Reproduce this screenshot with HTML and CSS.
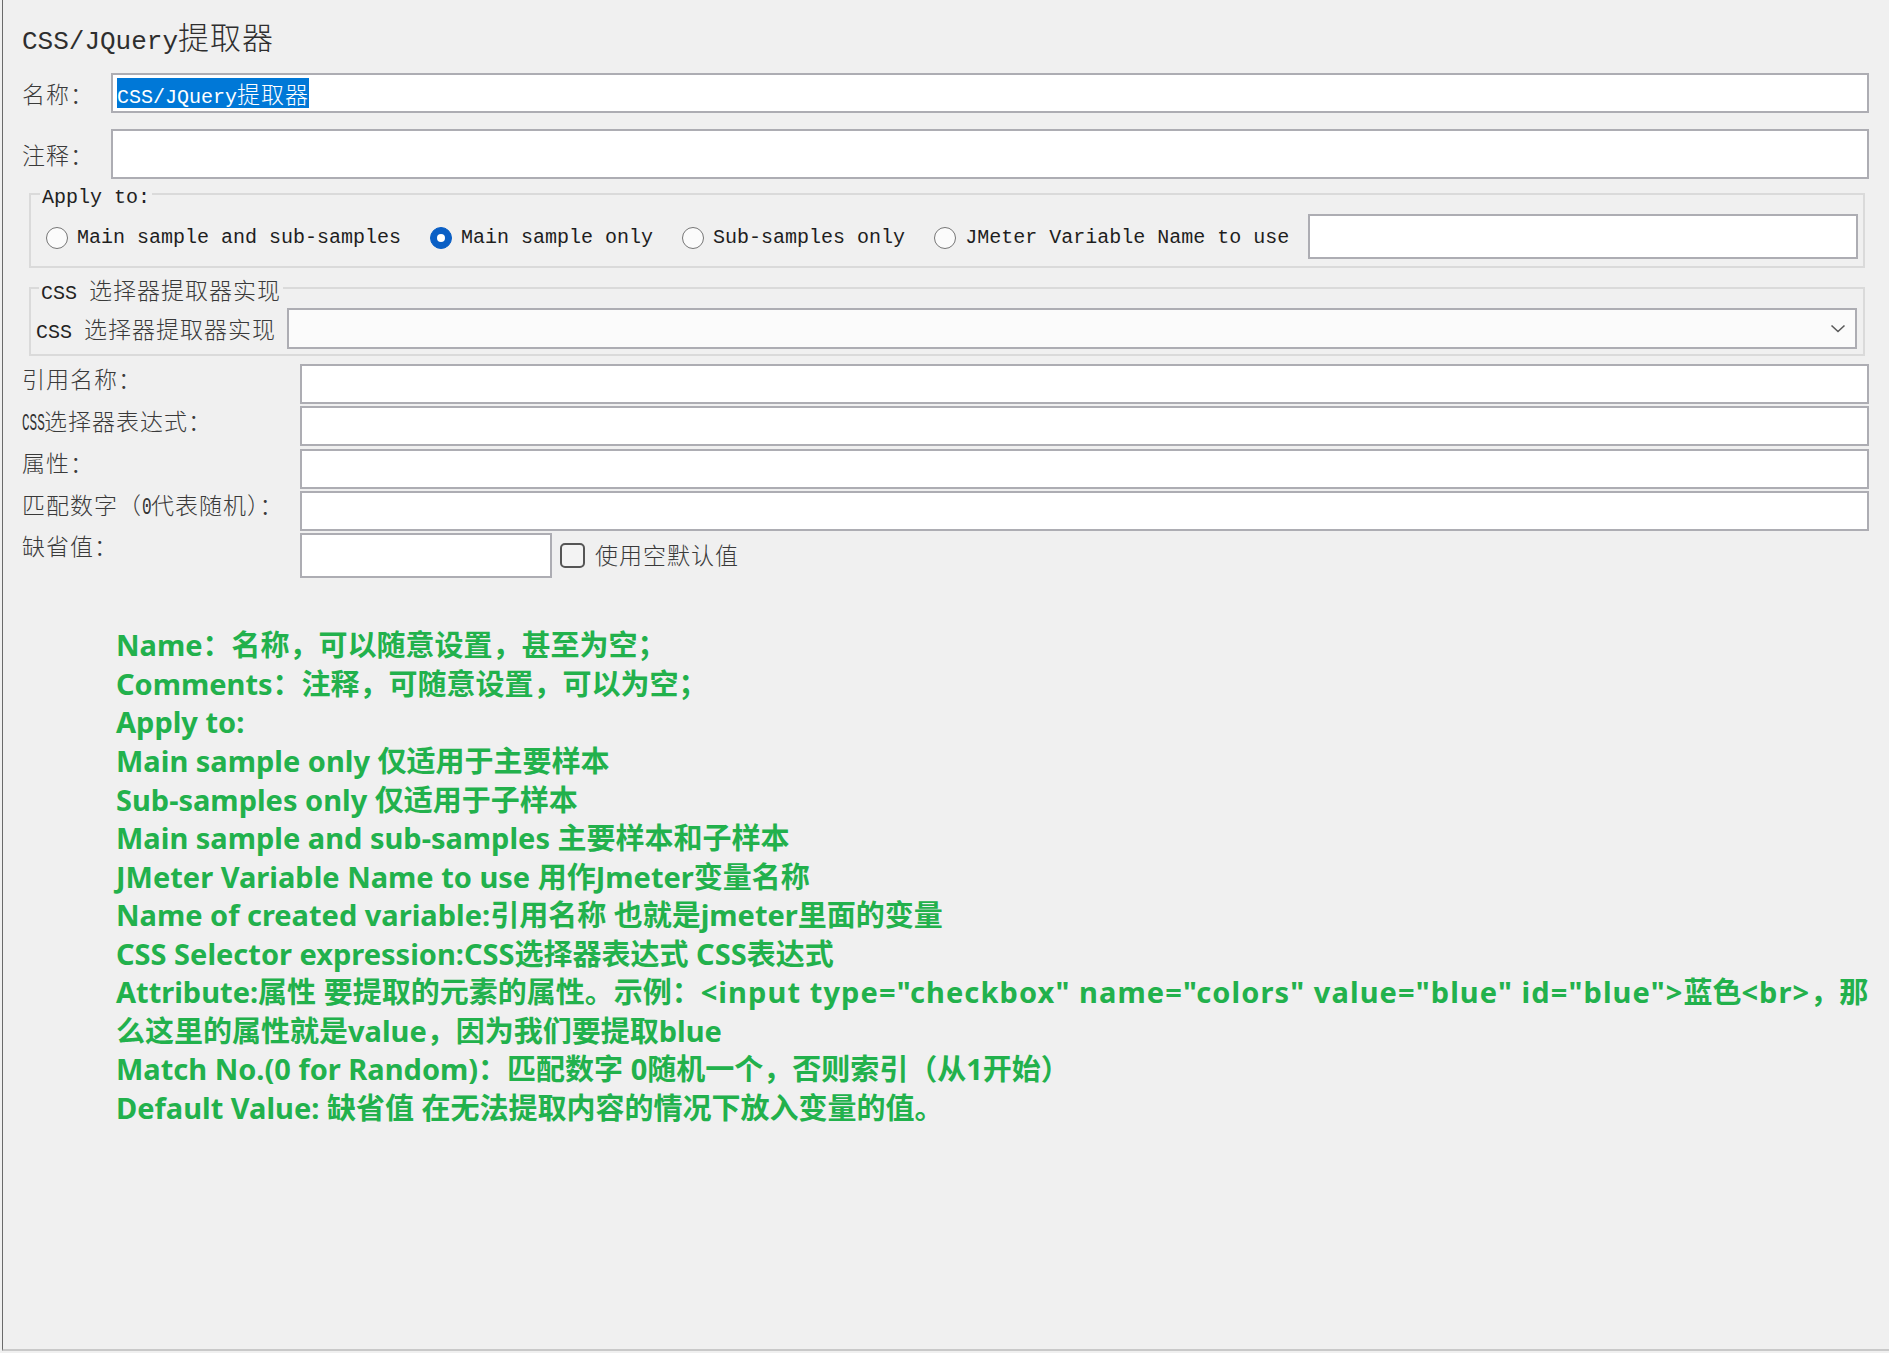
FILE: index.html
```html
<!DOCTYPE html>
<html lang="zh-CN">
<head>
<meta charset="utf-8">
<title>CSS/JQuery提取器</title>
<link rel="stylesheet" href="styles.css">
</head>
<body>
<div class="panel">
  <div class="title">CSS/JQuery<span class="zh">提取器</span></div>

  <div class="row row-name">
    <div class="lbl"><span class="zh">名称：</span></div>
    <div class="field field-name"><span class="sel">CSS/JQuery<span class="zh">提取器</span></span></div>
  </div>

  <div class="row row-comment">
    <div class="lbl"><span class="zh">注释：</span></div>
    <div class="field field-comment"></div>
  </div>

  <div class="group group-apply">
    <div class="legend">Apply to:</div>
    <div class="radios">
      <div class="radio"><span class="dot"></span><span class="rtext">Main sample and sub-samples</span></div>
      <div class="radio"><span class="dot on"></span><span class="rtext">Main sample only</span></div>
      <div class="radio"><span class="dot"></span><span class="rtext">Sub-samples only</span></div>
      <div class="radio radio-last"><span class="dot"></span><span class="rtext">JMeter Variable Name to use</span></div>
      <div class="field field-var"></div>
    </div>
  </div>

  <div class="group group-impl">
    <div class="legend">CSS <span class="zh">选择器提取器实现</span></div>
    <div class="impl-row">
      <div class="impl-lbl">CSS <span class="zh">选择器提取器实现</span></div>
      <div class="combo">
        <svg class="chev" width="16" height="9" viewBox="0 0 16 9"><polyline points="1.5,1.5 8,7.5 14.5,1.5" fill="none" stroke="#5a5a5a" stroke-width="1.6"/></svg>
      </div>
    </div>
  </div>

  <div class="form">
    <div class="frow">
      <div class="flbl"><span class="zh">引用名称：</span></div>
      <div class="field field-row"></div>
    </div>
    <div class="frow">
      <div class="flbl"><span class="cond">CSS</span><span class="zh">选择器表达式：</span></div>
      <div class="field field-row"></div>
    </div>
    <div class="frow">
      <div class="flbl"><span class="zh">属性：</span></div>
      <div class="field field-row"></div>
    </div>
    <div class="frow">
      <div class="flbl"><span class="zh">匹配数字（</span><span class="cond cond-one">0</span><span class="zh">代表随机）：</span></div>
      <div class="field field-row"></div>
    </div>
    <div class="frow frow-default">
      <div class="flbl flbl-top"><span class="zh">缺省值：</span></div>
      <div class="field field-default"></div>
      <div class="chk"><span class="box"></span><span class="zh chk-text">使用空默认值</span></div>
    </div>
  </div>

  <div class="notes">
    <p class="line">Name：名称，可以随意设置，甚至为空；</p>
    <p class="line">Comments：注释，可随意设置，可以为空；</p>
    <p class="line">Apply to:</p>
    <p class="line">Main sample only 仅适用于主要样本</p>
    <p class="line">Sub-samples only 仅适用于子样本</p>
    <p class="line">Main sample and sub-samples 主要样本和子样本</p>
    <p class="line">JMeter Variable Name to use 用作Jmeter变量名称</p>
    <p class="line">Name of created variable:引用名称 也就是jmeter里面的变量</p>
    <p class="line">CSS Selector expression:CSS选择器表达式 CSS表达式</p>
    <p class="line">Attribute:属性 要提取的元素的属性。示例：<span class="wide">&lt;input type="checkbox" name="colors" value="blue" id="blue"&gt;</span>蓝色<span class="wide">&lt;br&gt;</span>，那</p>
    <p class="line">么这里的属性就是value，因为我们要提取blue</p>
    <p class="line">Match No.(0 for Random)：匹配数字 0随机一个，否则索引（从1开始）</p>
    <p class="line">Default Value: 缺省值 在无法提取内容的情况下放入变量的值。</p>
  </div>
</div>
</body>
</html>
```

FILE: styles.css
```css
* { box-sizing: border-box; }

html, body {
  margin: 0;
  padding: 0;
  height: 100%;
}

body {
  background: #f0f0f0;
  font-family: "Liberation Mono", "Noto Sans CJK SC", monospace;
  font-size: 20px;
  color: #2a2a2a;
  overflow: hidden;
}

.panel {
  margin-left: 2px;
  height: 1351px;
  border-left: 1px solid #6a6a6a;
  border-bottom: 2px solid #c9c9c9;
  padding: 16px 20px 0 19px;
}

.zh {
  font-family: "Noto Sans CJK SC", sans-serif;
  font-size: 23px;
  font-weight: 300;
  letter-spacing: 1px;
  color: #3a3a3a;
}

.cond {
  display: inline-block;
  width: 22px;
  font-size: 23px;
  transform: scaleX(0.55);
  transform-origin: left center;
  white-space: nowrap;
  color: #333;
}

.cond-one {
  width: 9px;
  transform: scaleX(0.7);
}

/* title */
.title {
  height: 40px;
  line-height: 40px;
  font-size: 26px;
  color: #2e2e2e;
  white-space: nowrap;
}

.title .zh {
  font-size: 31px;
  letter-spacing: 1px;
  color: #2e2e2e;
}

/* top rows */
.row {
  display: flex;
  align-items: center;
}

.lbl {
  width: 89px;
  flex: none;
  white-space: nowrap;
}

.field {
  background: #ffffff;
  border: 2px solid #adadb3;
}

.row-name { margin-top: 17px; }
.row-comment { margin-top: 16px; }

.field-name {
  flex: 1;
  height: 40px;
  padding: 3px 4px;
}

.sel {
  display: inline-block;
  height: 30px;
  line-height: 30px;
  background: #0078d7;
  color: #ffffff;
  white-space: nowrap;
}

.sel .zh { color: #ffffff; }

.field-comment {
  flex: 1;
  height: 50px;
}

/* groups */
.group {
  border: 2px solid #dadada;
  margin-right: 4px;
  margin-left: 7px;
}

.legend {
  width: max-content;
  line-height: 24px;
  height: 24px;
  margin-top: -9px;
  padding: 0 2px;
  background: #f0f0f0;
  white-space: nowrap;
  color: #222;
}

.group-apply {
  margin-top: 14px;
  padding: 0 5px 7px 9px;
}

.radios {
  margin-top: 4px;
  height: 45px;
  display: flex;
  align-items: center;
  padding-left: 6px;
}

.radio {
  display: flex;
  align-items: center;
  gap: 9px;
  margin-right: 29px;
  white-space: nowrap;
  flex: none;
  padding-top: 2px;
}

.radio-last { margin-right: 19px; }

.rtext { color: #1e1e1e; }

.dot {
  width: 22px;
  height: 22px;
  border-radius: 50%;
  border: 1.5px solid #767676;
  background: #fbfbfb;
  display: flex;
  align-items: center;
  justify-content: center;
}

.dot.on {
  background: #0a5fc5;
  border-color: #0a5fc5;
}

.dot.on::after {
  content: "";
  width: 8px;
  height: 8px;
  border-radius: 50%;
  background: #ffffff;
}

.field-var {
  flex: 1;
  height: 45px;
}

.group-impl {
  margin-top: 19px;
  padding: 0 6px 5px 5px;
}

.group-impl .legend {
  margin-left: 3px;
  margin-top: -12px;
}

.group-impl .impl-row { margin-top: 7px; }

.impl-row {
  display: flex;
  align-items: center;
}

.impl-lbl {
  width: 251px;
  flex: none;
  white-space: nowrap;
  color: #222;
  padding-bottom: 2px;
}

.combo {
  flex: 1;
  height: 41px;
  border: 2px solid #adadb3;
  background: #fbfbfb;
  display: flex;
  align-items: center;
  justify-content: flex-end;
  padding-right: 9px;
}

.chev { display: block; }

/* form rows */
.form {
  margin-top: 8px;
  display: flex;
  flex-direction: column;
  gap: 2.25px;
}

.frow {
  display: flex;
  align-items: center;
}

.flbl {
  width: 278px;
  flex: none;
  white-space: nowrap;
  line-height: 24px;
  color: #222;
  padding-bottom: 8px;
}

.flbl-top { padding-bottom: 0; }

.field-row {
  flex: 1;
  height: 40px;
}

.frow-default { align-items: flex-start; }

.field-default {
  width: 252px;
  height: 45px;
  flex: none;
}

.chk {
  height: 45px;
  margin-left: 8px;
  display: flex;
  align-items: center;
  gap: 10px;
}

.chk-text { padding-bottom: 4px; }

.box {
  width: 25px;
  height: 25px;
  border: 2px solid #555555;
  border-radius: 5px;
  background: #f3f3f3;
}

/* notes */
.notes {
  margin-top: 48.4px;
  padding-left: 94px;
  color: #22b14c;
  font-family: "Noto Sans", "Noto Sans CJK SC", sans-serif;
  font-weight: 700;
  font-size: 29px;
  line-height: 38.55px;
}

.line {
  margin: 0;
  white-space: nowrap;
}

.wide { letter-spacing: 1.1px; }
```
